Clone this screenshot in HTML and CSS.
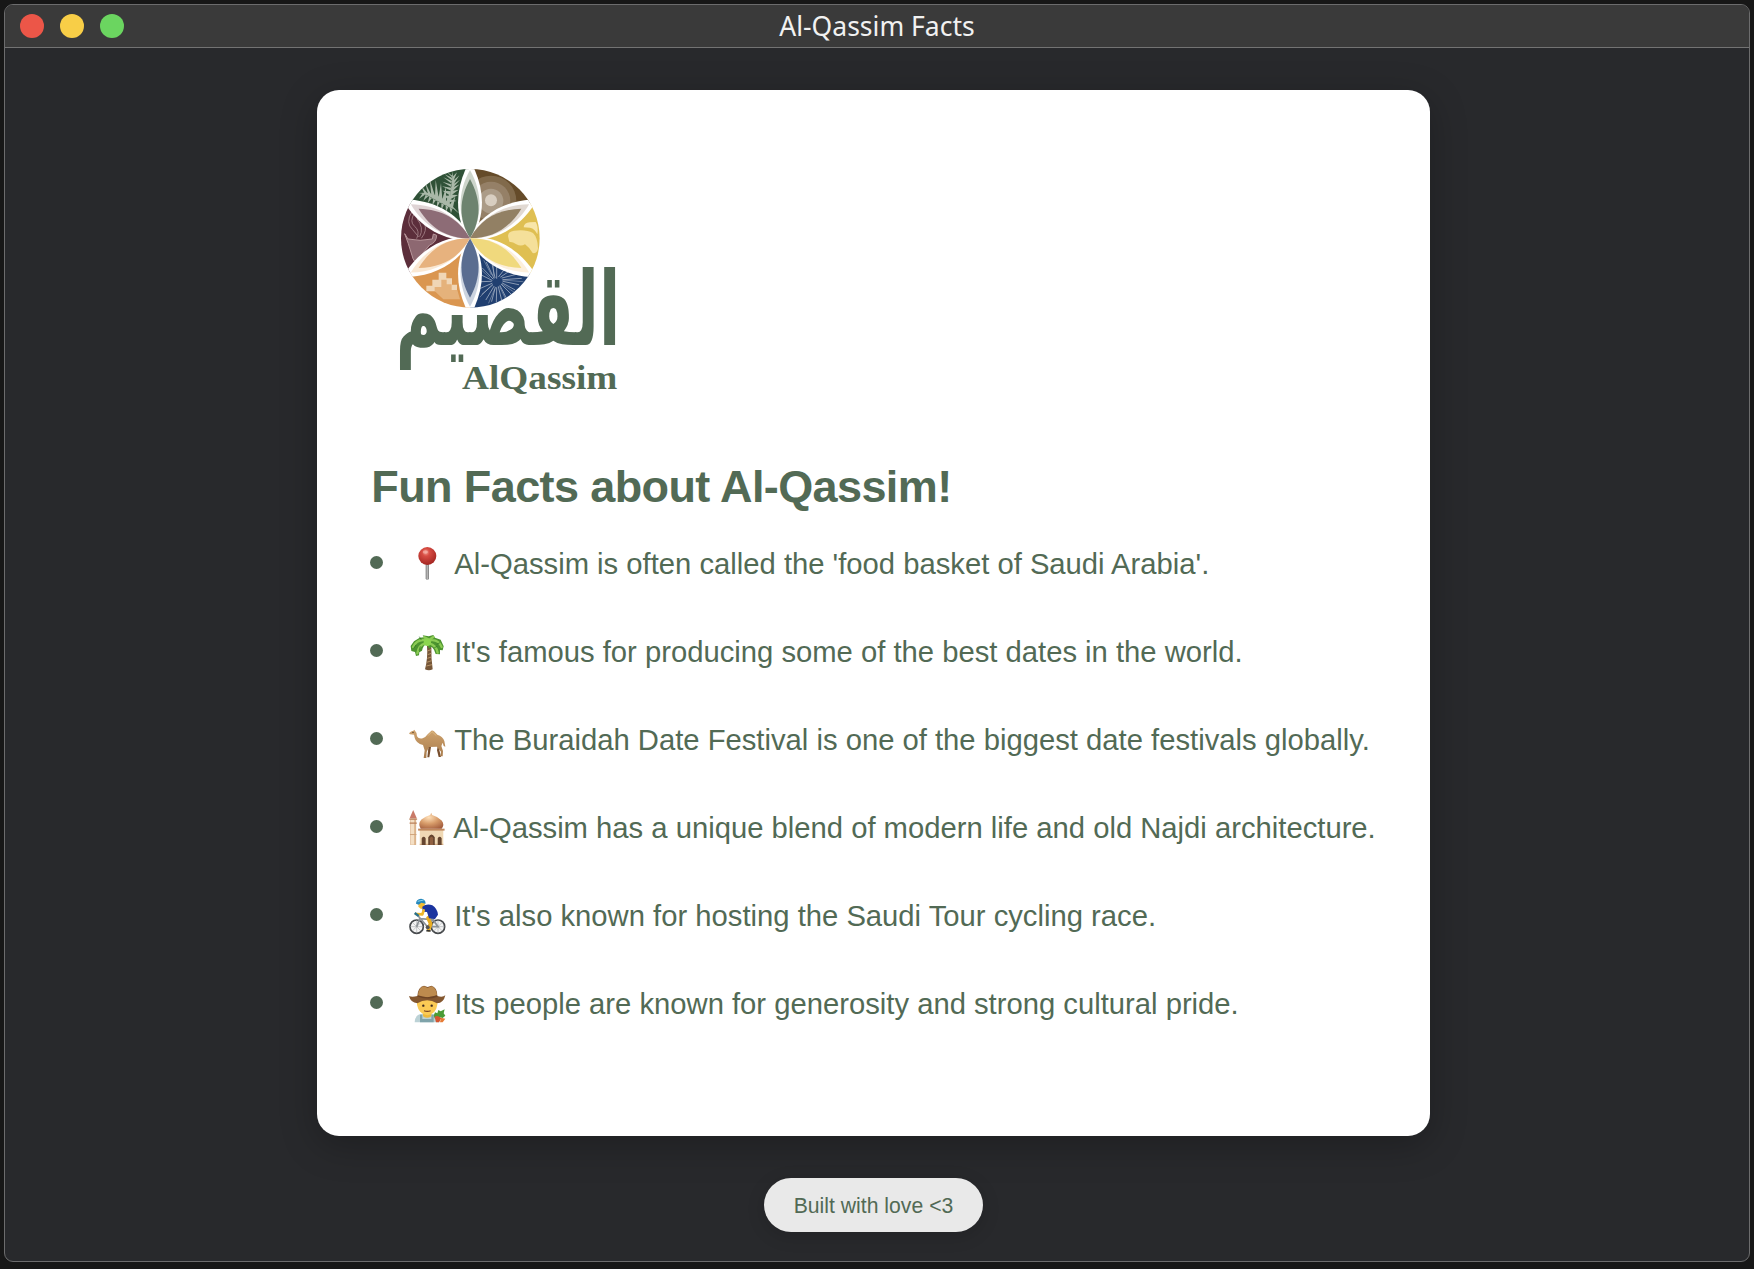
FILE: index.html
```html
<!DOCTYPE html>
<html lang="en">
<head>
<meta charset="utf-8">
<title>Al-Qassim Facts</title>
<link rel="stylesheet" href="styles.css">
</head>
<body>
<div class="window">
  <header class="titlebar">
    <div class="controls"><span class="dot red"></span><span class="dot yellow"></span><span class="dot green"></span></div>
    <h2 class="window-title">Al-Qassim Facts</h2>
  </header>
  <main class="content">
    <section class="card">
      <svg class="logo" viewBox="0 0 780 780" role="img" aria-label="AlQassim">
        <defs>
          <clipPath id="disc"><circle cx="271" cy="262" r="208"/></clipPath>
          <path id="petal-edge" d="M0 12C-46-62-46-138-10-215H10C46-138 46-62 0 12Z"/>
          <path id="petal-pale" d="M0 0C-38-62-38-138 0-205C38-138 38-62 0 0Z"/>
          <path id="petal-core" d="M0 0C-34-58-34-115 0-178C34-115 34-58 0 0Z"/>
        </defs>
        <g clip-path="url(#disc)">
          <path fill="#2f5137" d="M270 262V30H40V129Z"/>
          <path fill="#654b29" d="M270 262V30H520V118Z"/>
          <path fill="#dfbf52" d="M270 262L520 118V406Z"/>
          <path fill="#203f70" d="M270 262L520 406V500H270Z"/>
          <path fill="#da9650" d="M270 262V500H40V395Z"/>
          <path fill="#5c2e3b" d="M270 262L40 395V129Z"/>

          <g fill="#a9b8a8">
            <path d="M116 126Q180 118 238 188Q178 134 116 126Z"/>
            <path d="M134 129L122 102L144 129L135 93L154 132L149 84L165 135L167 87L176 139L183 96L187 145L198 107L198 152L212 120L209 162L226 136L218 174Z"/>
            <path d="M128 127L117 143L138 129L130 149L149 132L143 157L161 135L157 163L173 140L170 170L184 146L184 177L196 154L198 182L207 164L213 187L217 174Z"/>
            <path d="M216 60Q232 108 207 152Q220 108 216 60Z"/>
            <path d="M217 74L201 63L219 82L194 70L220 92L190 79L220 102L187 92L219 111L186 106L217 121L187 119L213 135L190 133L209 149Z"/>
            <path d="M218 77L231 64L221 88L238 73L222 98L240 86L221 108L239 100L219 119L236 116L216 131L234 132L211 145L230 150L208 154Z"/>
          </g>

          <circle cx="333" cy="150" r="76" fill="#816a4b"/>
          <circle cx="333" cy="150" r="58" fill="#958067"/>
          <circle cx="333" cy="150" r="37" fill="#ab9b87"/>
          <circle cx="333" cy="148" r="18" fill="#d8cec1"/>

          <path fill="#f5e09a" d="M384 255Q384 242 402 239Q438 234 459 246Q473 259 474 292Q472 309 458 306Q449 290 435 280Q423 287 409 280Q400 272 388 272Z"/>
          <path fill="#f8e6aa" d="M431 229Q432 215 449 214L467 213Q476 226 472 250Q465 233 450 230Z"/>

          <g fill="none" stroke="#a6b2c5" stroke-width="2.4" stroke-linecap="round">
            <path d="M350 382L350 342M345 380L337 343M342 382L319 334M339 384L308 352M336 388L300 370M334 391L303 392M336 397L299 413M338 402L306 430M342 406L318 446M346 409L335 451M350 410L349 456M355 407L365 448M360 404L378 439M364 400L393 429M367 396L404 416M369 391L416 401M369 386L424 382M366 381L409 370M362 378L387 361M356 377L371 358"/>
            <path stroke-width="1.5" d="M334 371L312 329M328 379L297 350M337 400L300 438M344 414L326 456M359 407L378 447M366 399L406 426M368 387L429 392M341 373L339 330"/>
          </g>

          <path fill="#f0d6b6" d="M176 365H199V382H216V401H231V421H139V404H157V386H176Z"/>
          <path fill="#e5b27b" d="M184 386H200V400H215V417H232L240 445H190L164 420V408H184Z"/>

          <path fill="#8d6871" stroke="#b8979c" stroke-width="3" d="M74 248L84 264Q120 272 157 264L160 249L170 253Q169 275 149 282L110 329Q102 334 99 323L85 278Z"/>
          <g fill="none" stroke="#9a777e" stroke-width="3"><path d="M96 181Q75 216 98 236L116 258M104 185Q87 213 104 226Q121 240 110 263M111 203Q133 231 119 257M133 218Q143 237 124 262"/></g>

          <g fill="#fff">
            <use href="#petal-edge" transform="translate(270 262)"/>
            <use href="#petal-edge" transform="translate(270 262) rotate(60)"/>
            <use href="#petal-edge" transform="translate(270 262) rotate(120)"/>
            <use href="#petal-edge" transform="translate(270 262) rotate(180)"/>
            <use href="#petal-edge" transform="translate(270 262) rotate(240)"/>
            <use href="#petal-edge" transform="translate(270 262) rotate(300)"/>
          </g>
          <g transform="translate(270 262)"><use href="#petal-pale" fill="#cdd5cb"/><use href="#petal-core" fill="#6d836f"/></g>
          <g transform="translate(270 262) rotate(60)"><use href="#petal-pale" fill="#e1d9d2"/><use href="#petal-core" fill="#928064"/></g>
          <g transform="translate(270 262) rotate(120)"><use href="#petal-pale" fill="#fcefdc"/><use href="#petal-core" fill="#f0d97d"/></g>
          <g transform="translate(270 262) rotate(180)"><use href="#petal-pale" fill="#cbd3df"/><use href="#petal-core" fill="#5a6d90"/></g>
          <g transform="translate(270 262) rotate(240)"><use href="#petal-pale" fill="#fae8d3"/><use href="#petal-core" fill="#e7b27e"/></g>
          <g transform="translate(270 262) rotate(300)"><use href="#petal-pale" fill="#dfd4d5"/><use href="#petal-core" fill="#8d6c76"/></g>
        </g>
        <text class="logo-arabic" transform="translate(384 583)" text-anchor="middle" textLength="673" lengthAdjust="spacingAndGlyphs">القصيم</text>
        <text class="logo-latin" x="246" y="713" textLength="466" lengthAdjust="spacingAndGlyphs">AlQassim</text>
      </svg>

      <h1 class="heading">Fun Facts about Al-Qassim!</h1>
      <ul class="facts">
        <li class="fact">
          <svg class="emoji" viewBox="0 0 120 120">
            <defs><radialGradient id="pin" cx=".42" cy=".3" r=".7"><stop offset="0" stop-color="#f29a8e"/><stop offset=".3" stop-color="#d74c43"/><stop offset="1" stop-color="#a32521"/></radialGradient><linearGradient id="steel"><stop offset="0" stop-color="#777"/><stop offset=".5" stop-color="#bbb"/><stop offset="1" stop-color="#777"/></linearGradient></defs>
            <path fill="url(#steel)" d="M56 58H66V104Q61 112 56 104Z"/><circle cx="61" cy="36" r="27" fill="url(#pin)"/><ellipse cx="55" cy="24" rx="8" ry="5" fill="#f8bdb4" opacity=".6"/>
          </svg>
          <span>Al-Qassim is often called the 'food basket of Saudi Arabia'.</span>
        </li>
        <li class="fact">
          <svg class="emoji" viewBox="0 0 120 120">
            <path fill="#765638" d="M60 42L73 42Q72 78 77 112Q66 118 54 112Q63 78 60 42Z"/>
            <path fill="none" stroke="#b69368" stroke-width="3" d="M61 57L72 53M62 68L73 64M61 79L73 75M59 91L74 86M58 102L75 98"/>
            <path fill="#4c942f" d="M60 35Q48 40 45 56L37 61L36 70L27 72L24 60L13 57L11 42L21 28L38 17L51 16L47 10L65 13L79 9L84 17L101 23L110 43L107 55L99 54L99 67L86 66L81 53L74 44L66 50Z"/>
            <path fill="none" stroke="#8bcb54" stroke-width="7" stroke-linecap="round" d="M60 26Q32 18 18 45M55 34Q35 38 31 64M65 26Q93 19 104 45M67 34Q88 40 92 62M52 16L66 23M79 15L67 23"/>
            <path stroke="#2b6e23" stroke-width="2" d="M20 49L27 39M36 56L40 43M89 37L99 32M82 47L91 43M43 24L37 14"/>
            <circle cx="61" cy="31" r="11" fill="#8bd64f"/>
          </svg>
          <span>It's famous for producing some of the best dates in the world.</span>
        </li>
        <li class="fact">
          <svg class="emoji" viewBox="0 0 120 120">
            <defs><linearGradient id="coat" x2="0" y2="1"><stop stop-color="#cfa36d"/><stop offset="1" stop-color="#a87b4c"/></linearGradient></defs>
            <path fill="#79502f" d="M59 79L64 84L61 112H67L72 81ZM92 79L90 91L95 111H102L97 90L103 77Z"/>
            <path fill="url(#coat)" d="M6 40Q12 33 19 32L22 29L25 34Q31 39 30 49Q35 58 47 55Q57 51 62 43L70 35Q75 28 81 34L91 44Q108 49 112 63L115 80L110 78L107 68L103 78L108 93L107 109H100L102 95L90 80L66 81L59 96L58 114H50L53 91L48 75Q27 70 23 53L21 44L9 43Z"/>
            <path fill="none" stroke="#dcb983" stroke-width="3" d="M63 47L75 35L88 47"/><circle cx="18" cy="37" r="2" fill="#3b281a"/>
          </svg>
          <span>The Buraidah Date Festival is one of the biggest date festivals globally.</span>
        </li>
        <li class="fact">
          <svg class="emoji" viewBox="0 0 120 120">
            <defs><radialGradient id="dome" cx=".4" cy=".3" r=".8"><stop stop-color="#ffe0b9"/><stop offset=".5" stop-color="#d79b69"/><stop offset="1" stop-color="#a35d3d"/></radialGradient></defs>
            <path fill="#efd8b4" d="M39 66H111V112H39Z"/><path fill="#c0885d" d="M34 62H115V68H34Z"/>
            <path fill="url(#dome)" d="M42 62Q32 48 44 34Q57 24 71 20L74 13L77 20Q95 25 106 37Q116 49 106 62Z"/>
            <path fill="#dcb48c" d="M10 31H28V112H10Z"/><path fill="#f4dfc4" d="M12 34H22V111H12Z"/>
            <path fill="#c97a68" d="M8 30L19 5L30 30Z"/><path stroke="#ba8059" stroke-width="4" d="M7 33H31M8 45H30"/>
            <path stroke="#cfa27a" stroke-width="3" d="M9 80H29M39 110H111"/>
            <path fill="#65452f" d="M65 112V88Q75 72 85 88V112ZM45 112V91Q51 82 57 91V112ZM94 112V91Q100 82 106 91V112Z"/>
            <path fill="#8f6040" d="M70 112V91Q75 82 80 91V112Z"/>
          </svg>
          <span>Al-Qassim has a unique blend of modern life and old Najdi architecture.</span>
        </li>
        <li class="fact">
          <svg class="emoji" viewBox="0 0 120 120">
            <g fill="#f4f4f4" stroke="#45484b" stroke-width="5"><circle cx="29" cy="92" r="20"/><circle cx="93" cy="92" r="20"/></g>
            <path stroke="#9a9ea0" stroke-width="1.5" d="M9 92H49M29 72V112M15 78L43 106M43 78L15 106M73 92H113M93 72V112M79 78L107 106M107 78L79 106"/>
            <path fill="none" stroke="#8d9397" stroke-width="5" d="M29 92L39 66L62 93L77 69L93 92H62M39 68L76 71M34 59L40 70M71 67H84"/>
            <path fill="none" stroke="#e9ad22" stroke-width="11" stroke-linecap="round" stroke-linejoin="round" d="M76 57L63 66L71 83L65 101"/>
            <path fill="#f4bc32" d="M35 21Q44 14 54 22L52 36L42 39L34 32Z"/>
            <path fill="#1b349f" d="M46 32Q60 21 76 28Q91 38 93 56L84 69L66 67L60 48L47 47Z"/>
            <path fill="none" stroke="#eeb62b" stroke-width="8" stroke-linecap="round" stroke-linejoin="round" d="M50 43L46 55L27 54"/>
            <path fill="#2788bb" d="M27 23Q27 9 42 8Q56 9 56 23L43 20L35 26Z"/><path stroke="#8ad5f1" stroke-width="3" d="M32 16L50 12"/>
            <path stroke="#2a718d" stroke-width="7" d="M23 51L35 60"/><path stroke="#333" stroke-width="5" d="M58 104L71 105"/><circle cx="62" cy="94" r="6" fill="#555"/>
          </svg>
          <span>It's also known for hosting the Saudi Tour cycling race.</span>
        </li>
        <li class="fact">
          <svg class="emoji" viewBox="0 0 120 120">
            <path fill="#bcd2d6" d="M23 115Q24 91 45 89H75Q96 92 98 115Z"/><path fill="#7fa3aa" d="M39 92H46V105H73V92H80V115H39Z"/>
            <path fill="#edb93c" d="M48 80H73V97Q60 106 48 97Z"/>
            <path fill="#fbcb55" d="M30 42H91V62Q87 90 61 94Q35 90 30 62Z"/>
            <path fill="#84572f" d="M6 36Q15 41 31 36Q33 8 51 5L62 9L73 5Q91 9 91 36Q107 41 115 34Q110 57 90 58Q60 40 31 58Q11 56 6 36Z"/>
            <path fill="#bd8b4e" d="M33 34Q36 9 51 7L62 12L73 7Q88 11 90 34Q61 45 33 34Z"/><path fill="none" stroke="#6d4424" stroke-width="4" d="M32 36Q61 47 91 36"/>
            <circle cx="49" cy="65" r="3.5" fill="#3e2b20"/><circle cx="74" cy="65" r="3.5" fill="#3e2b20"/><path fill="none" stroke="#754022" stroke-width="3.5" d="M51 80Q61 84 71 80"/>
            <path fill="#4a9b36" d="M80 95L84 85L91 88L94 78L101 82L113 76L110 88L115 95L107 102L95 99L84 104Z"/><path fill="#d45631" d="M83 99Q91 91 103 103L96 115H87Z"/><path fill="#e67b35" d="M102 101L115 104L107 115H99Z"/>
          </svg>
          <span>Its people are known for generosity and strong cultural pride.</span>
        </li>
      </ul>
    </section>
    <footer class="badge">Built with love &lt;3</footer>
  </main>
</div>
</body>
</html>
```
FILE: styles.css
```css
* { box-sizing: border-box; }

body {
  margin: 0;
  height: 1269px;
  padding: 4px 4px 7px;
  background: #171717;
  font-family: "Liberation Sans", Arial, sans-serif;
  color: #526a55;
}

.window {
  height: 1258px;
  border: 1px solid #6c6c6d;
  border-radius: 9px;
  overflow: hidden;
  background: #28292c;
}

.titlebar {
  display: grid;
  grid-template-columns: 1fr auto 1fr;
  align-items: center;
  height: 43px;
  padding: 0 15px;
  background: #3a3a3a;
  border-bottom: 1px solid #737373;
}

.controls { display: flex; gap: 16px; }
.dot { width: 24px; height: 24px; border-radius: 50%; }
.red { background: #ec5648; }
.yellow { background: #f8ce47; }
.green { background: #6bd560; }

.window-title {
  margin: 0;
  font: 400 26.5px/36px "Noto Sans", sans-serif;
  color: #f1f1f1;
}

.content {
  display: flex;
  flex-direction: column;
  align-items: center;
  padding: 41.5px 7px 0 0;
}

.card {
  width: 1113.5px;
  height: 1046px;
  padding: 61px 54.5px 0;
  border-radius: 22px;
  background: #fff;
  box-shadow: 0 9px 36px rgba(0, 0, 0, .25);
}

.logo { display: block; width: 260px; height: 260px; margin-left: 9px; overflow: visible; }
.logo-arabic { font: 700 306px "DejaVu Sans", sans-serif; fill: #526a55; }
.logo-latin { font: 700 104px "Liberation Serif", serif; fill: #526a55; }

.heading {
  margin: 50px 0 0;
  font-size: 45px;
  line-height: 52px;
  letter-spacing: -.6px;
  white-space: nowrap;
}

.facts {
  display: flex;
  flex-direction: column;
  gap: 48.2px;
  margin: 31px 0 0;
  padding: 0;
  list-style: none;
}

.fact {
  display: flex;
  align-items: center;
  height: 40px;
  font-size: 29.22px;
  line-height: 40px;
  white-space: nowrap;
}

.fact::before {
  content: "";
  width: 13px;
  height: 13px;
  margin: 0 24px 3px -1px;
  border-radius: 50%;
  background: #526a55;
}

.emoji { width: 40px; height: 40px; margin-right: 7px; }

.badge {
  width: 219px;
  height: 54px;
  margin-top: 42px;
  border-radius: 27px;
  background: #e9e9e9;
  box-shadow: 0 4px 18px rgba(0, 0, 0, .15);
  font-size: 21.2px;
  line-height: 55px;
  text-align: center;
}
```
